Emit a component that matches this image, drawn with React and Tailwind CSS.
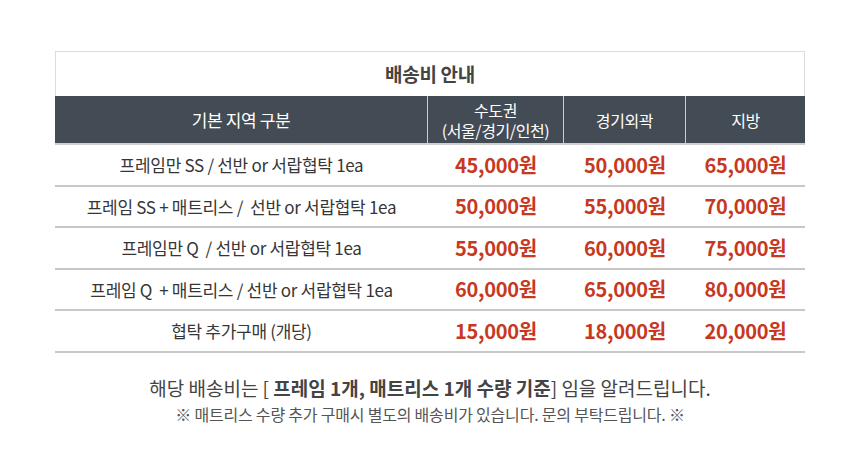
const rows = [
  { name: "프레임만 SS / 선반 or 서랍협탁 1ea", prices: ["45,000원", "50,000원", "65,000원"] },
  { name: "프레임 SS + 매트리스 /  선반 or 서랍협탁 1ea", prices: ["50,000원", "55,000원", "70,000원"] },
  { name: "프레임만 Q  / 선반 or 서랍협탁 1ea", prices: ["55,000원", "60,000원", "75,000원"] },
  { name: "프레임 Q  + 매트리스 / 선반 or 서랍협탁 1ea", prices: ["60,000원", "65,000원", "80,000원"] },
  { name: "협탁 추가구매 (개당)", prices: ["15,000원", "18,000원", "20,000원"] },
];

function App() {
  return (
    <div
      className="w-[860px] h-[456px] bg-white pt-[51px] flex flex-col items-center"
      style={{ fontFamily: '"Noto Sans CJK KR", "Noto Sans", sans-serif' }}
    >
      <div className="w-[750px]">
        <div className="h-[45px] border border-b-0 border-[#dcdcdc] flex items-center justify-center text-[19px] font-bold text-[#444] tracking-[-0.3px]">
          배송비 안내
        </div>
        <div className="flex h-[49px] bg-[#434b54] text-white text-[16px] tracking-[-0.4px] border-b-2 border-[#cfcfcf]">
          <div className="w-[373px] flex items-center justify-center border-r border-[#c9cdd2] text-[17px]">기본 지역 구분</div>
          <div className="w-[136px] flex flex-col items-center justify-center leading-[20px] border-r border-[#c9cdd2]">
            <span>수도권</span>
            <span>(서울/경기/인천)</span>
          </div>
          <div className="w-[122px] flex items-center justify-center border-r border-[#c9cdd2]">경기외곽</div>
          <div className="flex-1 flex items-center justify-center">지방</div>
        </div>
        {rows.map((row, i) => (
          <div key={i} className="flex h-[41.5px] border-b-2 border-[#c8c8c8]">
            <div className="w-[373px] flex items-center justify-center text-[17px] text-[#363636] tracking-[-0.3px] whitespace-pre">
              {row.name}
            </div>
            <div className="w-[136px] flex items-center justify-center text-[20px] font-bold text-[#c7391f] tracking-[-0.3px]">
              {row.prices[0]}
            </div>
            <div className="w-[122px] flex items-center justify-center text-[20px] font-bold text-[#c7391f] tracking-[-0.3px]">
              {row.prices[1]}
            </div>
            <div className="flex-1 flex items-center justify-center text-[20px] font-bold text-[#c7391f] tracking-[-0.3px]">
              {row.prices[2]}
            </div>
          </div>
        ))}
      </div>
      <p className="mt-[23px] text-[19px] text-[#444] leading-[24px]">
        해당 배송비는 [ <b className="font-bold">프레임 1개, 매트리스 1개 수량 기준</b>] 임을 알려드립니다.
      </p>
      <p className="mt-[3px] text-[16px] text-[#555] tracking-[-0.2px] leading-[22px]">
        ※ 매트리스 수량 추가 구매시 별도의 배송비가 있습니다. 문의 부탁드립니다. ※
      </p>
    </div>
  );
}

export default App;
